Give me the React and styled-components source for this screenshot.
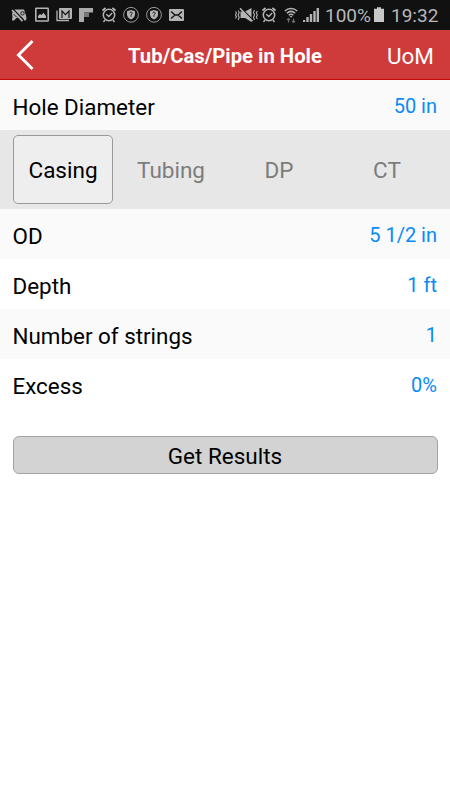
import React, { useState } from 'react';
import styled, { createGlobalStyle } from 'styled-components';

const GlobalStyle = createGlobalStyle`
  * {
    box-sizing: border-box;
  }

  body {
    margin: 0;
    background-color: #fff;
    font-family: Roboto, "Liberation Sans", sans-serif;
  }

  button {
    font-family: inherit;
    padding: 0;
  }
`;

const Screen = styled.div`
  width: 450px;
  height: 800px;
  overflow: hidden;
  background-color: #fff;
`;

const StyledStatusBar = styled.div`
  display: flex;
  justify-content: space-between;
  height: 30px;
  padding: 0 12px 0 11px;
  background-color: #111;
`;

const StatusGroup = styled.div`
  display: flex;
  align-items: center;
`;

const StatusIcon = styled.svg`
  display: block;
  flex: none;
  height: 30px;
  margin-right: ${props => props.$gap || 0}px;
  fill: none;
  stroke: #b4b4b4;
  color: #b4b4b4;
`;

const StatusText = styled.span`
  width: ${props => props.$width}px;
  margin-right: ${props => props.$gap || 0}px;
  padding-top: 2px;
  color: #b8b8b8;
  font-size: 19px;
  line-height: 30px;
  white-space: nowrap;
`;

const StyledHeader = styled.header`
  display: grid;
  grid-template-columns: 75px 1fr 59px;
  align-items: center;
  height: 50px;
  padding-right: 16px;
  background-color: #cf3a3a;
  border-bottom: 1px solid #c20a0a;
`;

const BackButton = styled.button`
  height: 49px;
  border: none;
  background: none;
  text-align: left;

  svg {
    display: block;
  }
`;

const HeaderTitle = styled.h1`
  margin: 0;
  padding-top: 2px;
  color: #fff;
  font-size: 20.3px;
  font-weight: 700;
  text-align: center;
  white-space: nowrap;
`;

const UnitsButton = styled.button`
  padding-top: 3px;
  border: none;
  background: none;
  color: #fff;
  font-size: 22.5px;
  text-align: right;
`;

const StyledRow = styled.div`
  display: flex;
  justify-content: space-between;
  height: 50px;
  padding: 0 13px 0 12.5px;
  background-color: ${props => (props.$shaded ? '#fafafa' : '#fff')};
`;

const RowLabel = styled.span`
  color: #000;
  font-size: 22.4px;
  line-height: 54px;
`;

const RowValue = styled.span`
  color: #078bf5;
  font-size: 20px;
  line-height: 52px;
`;

const PipeTabs = styled.div`
  display: grid;
  grid-template-columns: repeat(4, 100px);
  justify-content: space-between;
  height: 79px;
  padding: 5px 13px;
  background-color: #e7e7e7;
`;

const PipeTab = styled.button`
  height: 69px;
  border: 1px solid ${props => (props.$active ? '#999' : 'transparent')};
  border-radius: 5px;
  background-color: ${props => (props.$active ? '#eee' : 'transparent')};
  color: ${props => (props.$active ? '#000' : '#7c7c7c')};
  font-size: 22.5px;
`;

const ResultsButton = styled.button`
  display: block;
  width: 425px;
  height: 38px;
  margin: 27px 0 0 12.5px;
  padding-top: 1px;
  border: 1px solid #a3a3a3;
  border-radius: 6px;
  background-color: #d3d3d3;
  color: #000;
  font-size: 22.5px;
`;

const GameIcon = () => (
  <StatusIcon width="16" viewBox="0 0 16 30" $gap={8}>
    <path d="M3.500 9.500H13l2 6c.8 3 .5 5-1 5-1.300 0-2-1.500-3-3H6l-3 3H1l.5-4-.5-3z" fill="currentColor" stroke="none" />
    <path d="M2.500 9.500l10 10.500" stroke="#111" strokeWidth="1.300" />
    <path d="M1 10.200l10.500 11" strokeWidth="1.700" />
    <circle cx="11.500" cy="13.300" r="1.700" stroke="#111" strokeWidth=".9" />
    <path d="M2.500 14l3 3" stroke="#111" strokeWidth=".9" />
  </StatusIcon>
);

const PictureIcon = () => (
  <StatusIcon width="14" viewBox="0 0 14 30" $gap={7}>
    <rect x=".8" y="8.300" width="12.400" height="12.700" rx=".6" strokeWidth="1.600" />
    <path d="M3 18v-2l2-2 1.500 1 2-2.300L11 16v2z" fill="currentColor" stroke="none" />
  </StatusIcon>
);

const MailStackIcon = () => (
  <StatusIcon width="16" viewBox="0 0 16 30" $gap={7}>
    <path d="M1 10.500v10h12" strokeWidth="1.300" />
    <rect x="3" y="8" width="13" height="11" rx=".8" fill="currentColor" stroke="none" />
    <path d="M6 18v-7l3.500 3.600L13 11v7" stroke="#111" strokeWidth="1.200" />
  </StatusIcon>
);

const FlipIcon = () => (
  <StatusIcon width="15" viewBox="0 0 15 30" $gap={8}>
    <path d="M0 8h14v4.500H5V22H0z" fill="#aaa" stroke="none" />
    <path d="M5 12.500h5v4.500H5z" fill="#777" stroke="none" />
  </StatusIcon>
);

const AlarmIcon = ({ gap }) => (
  <StatusIcon width="14" viewBox="0 0 14 30" $gap={gap}>
    <circle cx="7" cy="15" r="5.700" strokeWidth="1.500" />
    <path d="M.5 10.500L3.600 8M13.500 10.500L10.400 8" strokeWidth="1.800" />
    <path d="M4.300 14.300l2.500 2.300 3.400-3.500M3 20l-1.500 2M11 20l1.500 2" strokeWidth="1.400" />
  </StatusIcon>
);

const ShieldIcon = ({ gap }) => (
  <StatusIcon width="16" viewBox="0 0 16 30" $gap={gap}>
    <circle cx="8" cy="14.800" r="7.400" strokeWidth="1" stroke="#999" />
    <path d="M8 10l4 1.200v3.300c0 2.300-1.700 4-4 5-2.300-1-4-2.700-4-5v-3.300z" fill="currentColor" stroke="none" />
    <path d="M6.800 13.300c0-1.700 2.500-1.600 2.400 0 0 .9-1.200 1-1.200 2v1.500" stroke="#111" strokeWidth=".9" />
  </StatusIcon>
);

const MessageIcon = () => (
  <StatusIcon width="15" viewBox="0 0 15 30">
    <rect y="9" width="15" height="12" rx="1" fill="currentColor" stroke="none" />
    <path d="M2 11.500l4 3.500h3l4-3.500M2 18.500L6 15M13 18.500L9 15" stroke="#111" strokeWidth="1.300" />
  </StatusIcon>
);

const MuteIcon = () => (
  <StatusIcon width="23" viewBox="0 0 23 30" $gap={4}>
    <path d="M5.500 11.500H10L16.500 8v14L10 18H5.500z" fill="currentColor" stroke="none" />
    <path d="M6 8l12 12" stroke="#111" strokeWidth="1.200" />
    <path d="M5 8.200l12.500 13" strokeWidth="1.500" />
    <path d="M3.200 10.500l1 2-1 2.500 1 2.500-1 2.500M.5 11.500l1 1.500-1 2 1 2-1 1.500M19.500 10l-1 2.500 1 2.500-1 2.500 1 2.500M22.300 11l-1 2 1 2-1 2 1 2" strokeWidth="1.100" />
  </StatusIcon>
);

const WifiIcon = () => (
  <StatusIcon width="14" viewBox="0 0 14 30" $gap={5}>
    <path d="M.8 11c3.500-3.200 8.900-3.200 12.400 0M2.800 13.200c2.500-2.200 5.900-2.200 8.400 0M4.700 15.200c1.400-1.200 3.200-1.200 4.600 0" strokeWidth="1.500" />
    <path d="M7 17.800l-1.500-1.800h3z" fill="currentColor" stroke="none" />
    <path d="M4.500 22.500v-4M3 20l1.500-1.500L6 20M9.500 18.500v4M8 21l1.500 1.500L11 21" stroke="#707070" strokeWidth="1.100" />
  </StatusIcon>
);

const SignalIcon = () => (
  <StatusIcon width="16" viewBox="0 0 16 30" $gap={6}>
    <path d="M1 22v-2M4.500 22v-5M8 22v-8M11.500 22V11M14.800 22V8" strokeWidth="2.400" />
  </StatusIcon>
);

const BatteryIcon = () => (
  <StatusIcon width="10" viewBox="0 0 10 30" $gap={7}>
    <path d="M3 7.300h4v1.500h3V22H0V8.800h3z" fill="#c8c8c8" stroke="none" />
  </StatusIcon>
);

const StatusBar = () => (
  <StyledStatusBar>
    <StatusGroup>
      <GameIcon />
      <PictureIcon />
      <MailStackIcon />
      <FlipIcon />
      <AlarmIcon gap={7} />
      <ShieldIcon gap={7} />
      <ShieldIcon gap={7} />
      <MessageIcon />
    </StatusGroup>
    <StatusGroup>
      <MuteIcon />
      <AlarmIcon gap={8} />
      <WifiIcon />
      <SignalIcon />
      <StatusText $width={46} $gap={3}>100%</StatusText>
      <BatteryIcon />
      <StatusText $width={47}>19:32</StatusText>
    </StatusGroup>
  </StyledStatusBar>
);

const Header = () => (
  <StyledHeader>
    <BackButton aria-label="Back">
      <svg width="50" height="49" viewBox="0 0 50 49" fill="none" stroke="#fff" strokeWidth="3">
        <path d="M32.500 11L18.500 25 32.500 39" />
      </svg>
    </BackButton>
    <HeaderTitle>Tub/Cas/Pipe in Hole</HeaderTitle>
    <UnitsButton>UoM</UnitsButton>
  </StyledHeader>
);

const Row = ({ label, value, shaded }) => (
  <StyledRow $shaded={shaded}>
    <RowLabel>{label}</RowLabel>
    <RowValue>{value}</RowValue>
  </StyledRow>
);

const pipeTypes = ['Casing', 'Tubing', 'DP', 'CT'];

const App = () => {
  const [pipeType, setPipeType] = useState('Casing');

  return (
    <Screen>
      <GlobalStyle />
      <StatusBar />
      <Header />
      <Row label="Hole Diameter" value="50 in" shaded />
      <PipeTabs>
        {pipeTypes.map(type => (
          <PipeTab key={type} $active={type === pipeType} onClick={() => setPipeType(type)}>
            {type}
          </PipeTab>
        ))}
      </PipeTabs>
      <Row label="OD" value="5 1/2 in" shaded />
      <Row label="Depth" value="1 ft" />
      <Row label="Number of strings" value="1" shaded />
      <Row label="Excess" value="0%" />
      <ResultsButton>Get Results</ResultsButton>
    </Screen>
  );
}

export default App;
